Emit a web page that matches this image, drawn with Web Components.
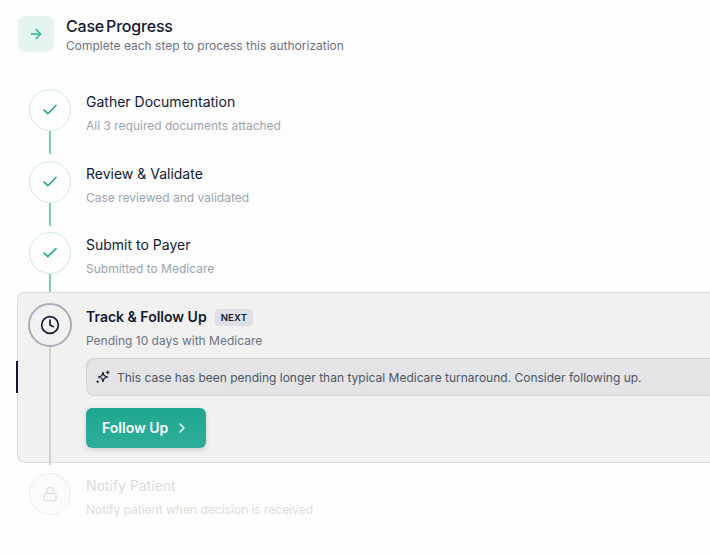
<!DOCTYPE html>
<html>
<head>
<meta charset="utf-8">
<style>
  html, body { margin: 0; padding: 0; background: #fdfdfd; overflow: hidden; height: 555px; }
  body { font-family: 'Inter', sans-serif; color: #111a33; }
</style>
</head>
<body>
<case-progress title="Case Progress" subtitle="Complete each step to process this authorization">
  <step-item state="done" heading="Gather Documentation" note="All 3 required documents attached"></step-item>
  <step-item state="done" heading="Review &amp; Validate" note="Case reviewed and validated"></step-item>
  <step-item state="done" heading="Submit to Payer" note="Submitted to Medicare" last-done></step-item>
  <step-item state="active" heading="Track &amp; Follow Up" note="Pending 10 days with Medicare">
    <span slot="badge">NEXT</span>
    <step-callout>This case has been pending longer than typical Medicare turnaround. Consider following up.</step-callout>
    <action-button>Follow Up</action-button>
  </step-item>
  <step-item state="locked" heading="Notify Patient" note="Notify patient when decision is received"></step-item>
</case-progress>

<script>
const ICONS = {
  done: `<svg width="18" height="18" viewBox="0 0 24 24" fill="none" stroke="#1fa58d" stroke-width="2.2" stroke-linecap="round" stroke-linejoin="round"><path d="M20 6 9 17l-5-5"/></svg>`,
  active: `<svg width="20" height="20" viewBox="0 0 24 24" fill="none" stroke="#111a33" stroke-width="2" stroke-linecap="round" stroke-linejoin="round"><circle cx="12" cy="12" r="10"/><path d="M12 6v6l4 2"/></svg>`,
  locked: `<svg width="16" height="16" viewBox="0 0 24 24" fill="none" stroke="#e0e0e0" stroke-width="2" stroke-linecap="round" stroke-linejoin="round"><rect x="3" y="11" width="18" height="11" rx="2"/><path d="M7 11V7a5 5 0 0 1 10 0v4"/></svg>`
};

class CaseProgress extends HTMLElement {
  constructor() {
    super();
    this.attachShadow({ mode: "open" });
  }

  connectedCallback() {
    this.shadowRoot.innerHTML = `
      <style>
        :host { display: block; padding-top: 16px; }
        header { display: flex; align-items: center; gap: 12px; margin: 0 0 37px 18px; height: 36px; }
        .icon {
          width: 36px; height: 36px; border-radius: 8px; background: #e4f4f1;
          display: flex; align-items: center; justify-content: center;
        }
        .text { padding-top: 2px; }
        h1 { margin: 0; font-size: 16px; line-height: 20px; font-weight: 500; letter-spacing: -0.2px; word-spacing: -2px; color: #111a33; }
        p { margin: 2px 0 0; font-size: 12px; line-height: 16px; color: #6b7280; }
        .steps { display: flex; flex-direction: column; padding-left: 17px; }
      </style>
      <header>
        <div class="icon">
          <svg width="16" height="16" viewBox="0 0 24 24" fill="none" stroke="#2bb39b" stroke-width="2" stroke-linecap="round" stroke-linejoin="round"><path d="M5 12h14"/><path d="m12 5 7 7-7 7"/></svg>
        </div>
        <div class="text">
          <h1>${this.getAttribute("title")}</h1>
          <p>${this.getAttribute("subtitle")}</p>
        </div>
      </header>
      <div class="steps"><slot></slot></div>
    `;
  }
}

class StepItem extends HTMLElement {
  constructor() {
    super();
    this.attachShadow({ mode: "open" });
  }

  connectedCallback() {
    const state = this.getAttribute("state");
    this.shadowRoot.innerHTML = `
      <style>
        :host { display: block; }
        .row { display: flex; gap: 15px; padding: 0 0 0 12px; position: relative; height: 71.5px; box-sizing: border-box; }
        .rail { width: 42px; flex: none; display: flex; flex-direction: column; align-items: center; }
        .circle {
          width: 42px; height: 42px; box-sizing: border-box; border-radius: 50%; flex: none;
          border: 1px solid #cfeae4; background: #fdfdfd;
          display: flex; align-items: center; justify-content: center;
        }
        .line { width: 2px; height: 23px; background: #7fcbb4; flex: none; }
        .body { min-width: 0; flex: 1; padding-top: 4px; }
        .head { display: flex; align-items: center; gap: 8px; height: 18px; }
        h3 { margin: 0; font-size: 14px; line-height: 18px; font-weight: 400; color: #111a33; }
        p { margin: 7px 0 0; font-size: 12px; line-height: 16px; color: #9ca3af; }
        ::slotted([slot="badge"]) {
          font-size: 9.5px; font-weight: 600; letter-spacing: 0.2px; color: #111a33;
          background: #dfe0e5; border-radius: 4px; padding: 2px 6px; line-height: 13px;
        }

        :host([last-done]) .line { height: 22px; }
        :host([last-done]) .row { height: 60px; }

        :host([state="active"]) .row {
          height: 171px; padding: 10px 0 0 10px; gap: 14px;
          background: #f1f1f2; border: 1px solid #dcdcdf; border-right: 0; border-radius: 8px 0 0 8px;
        }
        :host([state="active"]) .rail { width: 44px; }
        :host([state="active"]) .circle { width: 44px; height: 44px; border: 2px solid #a9adb9; background: #f1f1f2; }
        :host([state="active"]) .line { background: #d2d0cf; height: 118px; }
        :host([state="active"]) .body { padding-top: 5px; }
        :host([state="active"]) h3 { font-weight: 600; }
        :host([state="active"]) p { color: #6b7280; margin-top: 7px; }
        .marker { position: absolute; left: -2px; top: 68px; width: 2px; height: 32px; background: #111a33; }

        :host([state="locked"]) .row { padding-top: 10px; height: 82px; }
        :host([state="locked"]) .circle { border-color: #eeeeee; background: #fbfbfb; }
        :host([state="locked"]) .line { display: none; }
        :host([state="locked"]) h3 { color: #dcdcdc; }
        :host([state="locked"]) p { color: #dedede; }
      </style>
      <div class="row">
        ${state === "active" ? `<div class="marker"></div>` : ""}
        <div class="rail">
          <div class="circle">${ICONS[state]}</div>
          <div class="line"></div>
        </div>
        <div class="body">
          <div class="head"><h3>${this.getAttribute("heading")}</h3><slot name="badge"></slot></div>
          <p>${this.getAttribute("note")}</p>
          <slot></slot>
        </div>
      </div>
    `;
  }
}

class StepCallout extends HTMLElement {
  constructor() {
    super();
    this.attachShadow({ mode: "open" });
  }

  connectedCallback() {
    this.shadowRoot.innerHTML = `
      <style>
        :host {
          display: flex; align-items: center; gap: 6px; height: 38px; box-sizing: border-box;
          margin-top: 9px; padding-left: 8px; background: #e4e4e7;
          border: 1px solid #d2d3d8; border-right: 0; border-radius: 8px 0 0 8px;
          font-size: 12px; color: #4b5563;
        }
      </style>
      <svg width="16" height="16" viewBox="0 0 24 24" fill="none" stroke="#111a33" stroke-width="1.8" stroke-linecap="round" stroke-linejoin="round">
        <path d="M12 5 13.800 10.200 19 12l-5.200 1.800L12 19l-1.800-5.200L5 12l5.200-1.800z"/>
        <path d="M19 3v4"/><path d="M17 5h4"/><path d="M4 18v2"/><path d="M3 19h2"/>
      </svg>
      <span><slot></slot></span>
    `;
  }
}

class ActionButton extends HTMLElement {
  constructor() {
    super();
    this.attachShadow({ mode: "open" });
  }

  connectedCallback() {
    this.shadowRoot.innerHTML = `
      <style>
        :host {
          display: inline-flex; align-items: center; gap: 6px;
          width: 120px; height: 40px; box-sizing: border-box; margin-top: 12px;
          padding: 0 0 1px 16px;
          border-radius: 6px; color: #fff; font-size: 14px; font-weight: 600;
          background: linear-gradient(180deg, #1fa68f, #2eae9a);
          box-shadow: 0 2px 5px rgba(0, 0, 0, 0.14);
        }
      </style>
      <span><slot></slot></span>
      <svg width="16" height="16" viewBox="0 0 24 24" fill="none" stroke="#fff" stroke-width="2" stroke-linecap="round" stroke-linejoin="round"><path d="m9 18 6-6-6-6"/></svg>
    `;
  }
}

customElements.define("case-progress", CaseProgress);
customElements.define("step-item", StepItem);
customElements.define("step-callout", StepCallout);
customElements.define("action-button", ActionButton);
</script>
</body>
</html>
